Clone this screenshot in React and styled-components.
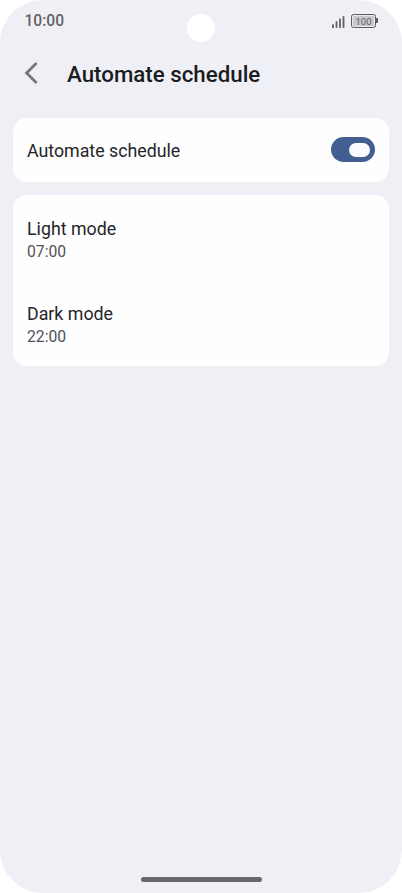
import { useState } from "react";
import styled, { createGlobalStyle } from "styled-components";

const App = () => {
  const [automate, setAutomate] = useState(true);

  return (
    <>
      <GlobalStyle />
      <Screen>
        <StatusBar>
          <Clock>10:00</Clock>
          <StatusIcons>
            <SignalIcon />
            <Battery>
              <BatteryLevel>100</BatteryLevel>
              <BatteryTip />
            </Battery>
          </StatusIcons>
          <Camera />
        </StatusBar>

        <Header>
          <BackButton aria-label="Back">
            <BackIcon />
          </BackButton>
          <Title>Automate schedule</Title>
        </Header>

        <Cards>
          <Card>
            <SwitchRow>
              <Label>Automate schedule</Label>
              <Switch
                role="switch"
                aria-checked={automate}
                aria-label="Automate schedule"
                $on={automate}
                onClick={() => setAutomate(!automate)}
              >
                <Thumb />
              </Switch>
            </SwitchRow>
          </Card>

          <TimesCard>
            <TimeRow>
              <Label>Light mode</Label>
              <Time>07:00</Time>
            </TimeRow>
            <TimeRow>
              <Label>Dark mode</Label>
              <Time>22:00</Time>
            </TimeRow>
          </TimesCard>
        </Cards>

        <NavArea>
          <HomeHandle />
        </NavArea>
      </Screen>
    </>
  );
};

const SignalIcon = () => (
  <svg width="13" height="12" viewBox="0 0 13 12" fill="#626266">
    <rect x="0" y="8.4" width="1.9" height="3.5" />
    <rect x="3.6" y="5.2" width="1.8" height="6.7" />
    <rect x="7.1" y="2.6" width="1.8" height="9.3" />
    <rect x="10.6" y="0.2" width="1.8" height="11.7" />
  </svg>
);

const BackIcon = () => (
  <svg width="14" height="22" viewBox="0 0 14 22" fill="none">
    <path d="M12.6 1L2.6 11L12.6 21" stroke="#77777a" strokeWidth="2.8" />
  </svg>
);

const GlobalStyle = createGlobalStyle`
  * {
    box-sizing: border-box;
  }

  body {
    margin: 0;
    background: #ffffff;
    font-family: Roboto, "Liberation Sans", sans-serif;
  }
`;

const Screen = styled.div`
  display: flex;
  flex-direction: column;
  width: 402px;
  height: 893px;
  border-radius: 43px;
  background: #eff0f6;
  overflow: hidden;
`;

const StatusBar = styled.div`
  position: relative;
  display: flex;
  align-items: center;
  justify-content: space-between;
  height: 41px;
  padding: 0 24.5px;
`;

const Clock = styled.span`
  margin-top: 1px;
  font-size: 15.6px;
  font-weight: 500;
  line-height: 18px;
  color: #626266;
`;

const StatusIcons = styled.div`
  display: flex;
  align-items: center;
  gap: 5.5px;

  svg {
    margin-top: 3px;
  }
`;

const Battery = styled.div`
  display: flex;
  align-items: center;
`;

const BatteryLevel = styled.div`
  width: 25px;
  height: 14px;
  padding-left: 1px;
  border: 1px solid #5c5c60;
  border-radius: 2.5px;
  background: #c9c9ce;
  box-shadow: inset 0 0 0 1px #e9e9ee;
  font-size: 9.5px;
  line-height: 13px;
  text-align: center;
  color: #606064;
`;

const BatteryTip = styled.div`
  width: 2px;
  height: 5px;
  border-radius: 0 1px 1px 0;
  background: #5c5c60;
`;

const Camera = styled.div`
  position: absolute;
  top: 13.5px;
  left: 186.5px;
  width: 28px;
  height: 28px;
  border-radius: 50%;
  background: #ffffff;
`;

const Header = styled.header`
  display: flex;
  align-items: center;
  height: 64px;
  padding-left: 24px;
`;

const BackButton = styled.button`
  display: flex;
  width: 43px;
  padding: 0;
  border: none;
  background: none;
  cursor: pointer;
`;

const Title = styled.h1`
  margin: 2px 0 0;
  font-size: 22.3px;
  font-weight: 500;
  line-height: 28px;
  color: #1b1c20;
`;

const Cards = styled.main`
  display: flex;
  flex: 1;
  flex-direction: column;
  gap: 13px;
  padding: 13px 13px 0;
`;

const Card = styled.section`
  border-radius: 14px;
  background: #fefefe;
`;

const TimesCard = styled(Card)`
  padding-bottom: 1px;
`;

const SwitchRow = styled.div`
  display: flex;
  align-items: center;
  justify-content: space-between;
  height: 64px;
  padding: 0 14px;
`;

const TimeRow = styled.div`
  display: flex;
  flex-direction: column;
  height: 85px;
  padding: 22px 14px 0;
`;

const Label = styled.span`
  font-size: 17.8px;
  line-height: 23px;
  color: #242529;
`;

const Time = styled.span`
  margin-top: 1px;
  font-size: 15.7px;
  line-height: 22px;
  color: #505156;
`;

const Switch = styled.button`
  display: flex;
  align-items: center;
  justify-content: ${({ $on }) => ($on ? "flex-end" : "flex-start")};
  width: 44px;
  height: 25px;
  margin-bottom: 1px;
  padding: 0 5px;
  border: none;
  border-radius: 13px;
  background: ${({ $on }) => ($on ? "#435f91" : "#c5c6cd")};
  cursor: pointer;
`;

const Thumb = styled.span`
  width: 21px;
  height: 14px;
  border-radius: 7px;
  background: #fbfaff;
`;

const NavArea = styled.footer`
  display: flex;
  justify-content: center;
  height: 16px;
`;

const HomeHandle = styled.div`
  width: 121px;
  height: 5px;
  border-radius: 3px;
  background: #66676a;
`;

export default App;
